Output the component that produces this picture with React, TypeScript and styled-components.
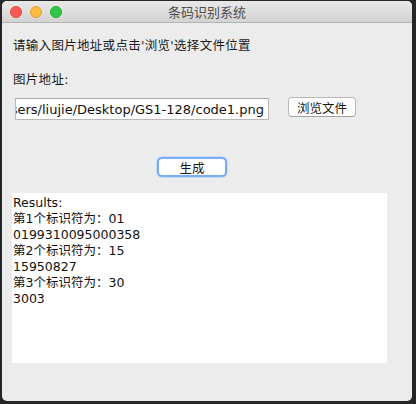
import React from "react";
import styled, { createGlobalStyle } from "styled-components";

const GlobalStyle = createGlobalStyle`
  html, body {
    margin: 0;
    padding: 0;
    background: #262626;
  }
`;

const lines = [
  "Results:",
  "第1个标识符为：01",
  "0199310095000358",
  "第2个标识符为：15",
  "15950827",
  "第3个标识符为：30",
  "3003",
];

const App = () => {
  return (
    <>
      <GlobalStyle />
      <Window>
        <TitleBar>
          <Lights>
            <Light color="#fc5753" edge="#df4744" />
            <Light color="#fdbc40" edge="#de9f34" />
            <Light color="#33c748" edge="#27aa35" />
          </Lights>
          <Title>条码识别系统</Title>
        </TitleBar>
        <Content>
          <Label top={15}>请输入图片地址或点击'浏览'选择文件位置</Label>
          <Label top={18}>图片地址:</Label>
          <Row>
            <Field>
              <FieldText>/Users/liujie/Desktop/GS1-128/code1.png</FieldText>
            </Field>
            <Button>浏览文件</Button>
          </Row>
          <GenerateButton>生成</GenerateButton>
          <Results>
            {lines.map((l, i) => (
              <Line key={i}>{l}</Line>
            ))}
          </Results>
        </Content>
      </Window>
    </>
  );
};

export default App;

const font = `"DejaVu Sans", "Noto Sans CJK SC", sans-serif`;

const Window = styled.div`
  margin: 1px 0 0 2px;
  width: 410px;
  height: 400px;
  background: #ececec;
  border-radius: 5px;
  overflow: hidden;
  font-family: ${font};
  font-size: 12.5px;
  color: #1a1a1a;
`;

const TitleBar = styled.div`
  position: relative;
  height: 21px;
  border-bottom: 1px solid #b4b4b4;
  background: linear-gradient(#e9e9e9, #d3d3d3);
  display: flex;
  align-items: center;
  justify-content: center;
`;

const Lights = styled.div`
  position: absolute;
  left: 8px;
  top: 5px;
  display: flex;
  gap: 8px;
`;

const Light = styled.div<{ color: string; edge: string }>`
  width: 12px;
  height: 12px;
  box-sizing: border-box;
  border-radius: 50%;
  background: ${(p) => p.color};
  border: 0.5px solid ${(p) => p.edge};
`;

const Title = styled.div`
  font-family: "Noto Sans CJK SC", sans-serif;
  font-size: 13px;
  color: #4d4d4d;
  line-height: 22px;
`;

const Content = styled.div`
  display: flex;
  flex-direction: column;
  align-items: flex-start;
`;

const Label = styled.div<{ top: number }>`
  margin: ${(p) => p.top}px 0 0 11px;
  line-height: 16px;
  letter-spacing: 0.3px;
  white-space: nowrap;
`;

const Row = styled.div`
  display: flex;
  align-items: flex-start;
  margin: 9px 0 0 13px;
  gap: 19px;
`;

const Field = styled.div`
  margin-top: 1px;
  width: 254px;
  height: 22px;
  box-sizing: border-box;
  background: #fff;
  border: 1px solid #b9b9b9;
  border-top-color: #a8a8a8;
  display: flex;
  justify-content: flex-end;
  align-items: center;
  overflow: hidden;
  padding-right: 4px;
`;

const FieldText = styled.span`
  white-space: nowrap;
  font-size: 13px;
  color: #111;
`;

const Button = styled.div`
  width: 68px;
  height: 20px;
  box-sizing: border-box;
  background: #fff;
  border: 1px solid #b8b8b8;
  border-bottom-color: #a3a3a3;
  border-radius: 4px;
  display: flex;
  align-items: center;
  justify-content: center;
  font-size: 12.5px;
  color: #1a1a1a;
`;

const GenerateButton = styled(Button)`
  margin: 37px 0 0 155px;
  width: 70px;
  border: 2px solid #79adf2;
  border-radius: 5px;
  box-shadow: 0 0 0 0.5px #a9c9f5;
`;

const Results = styled.div`
  margin: 16px 0 0 10px;
  width: 375px;
  height: 170px;
  box-sizing: border-box;
  background: #fff;
  padding: 2px 0 0 1px;
`;

const Line = styled.div`
  line-height: 16px;
  white-space: nowrap;
  color: #111;
`;
